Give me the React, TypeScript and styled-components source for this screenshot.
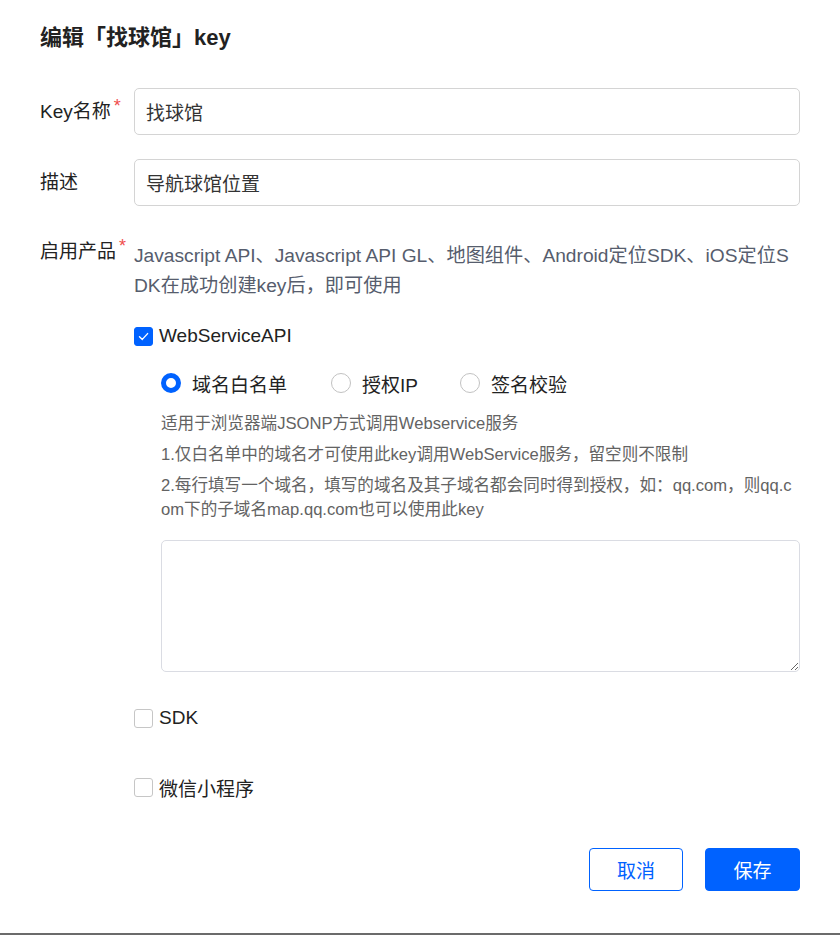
import React from "react";
import styled, { createGlobalStyle } from "styled-components";

const Global = createGlobalStyle`
  html, body { margin: 0; padding: 0; background: #fff; }
  body { font-family: "Liberation Sans", "Noto Sans CJK SC", sans-serif; }
  * { box-sizing: border-box; }
`;

const Dialog = styled.div`
  width: 840px;
  height: 935px;
  padding: 24px 40px 0 40px;
  border-bottom: 2px solid #6b6b6b;
  display: flex;
  flex-direction: column;
  color: #222;
`;

const Title = styled.h2`
  margin: 0;
  font-size: 22px;
  line-height: 28px;
  font-weight: 700;
  color: #222;
`;

const Row = styled.div<{ $top: number; $align?: string }>`
  display: grid;
  grid-template-columns: 94px 1fr;
  align-items: ${(p) => p.$align ?? "center"};
  margin-top: ${(p) => p.$top}px;
`;

const Label = styled.div<{ $start?: boolean }>`
  font-size: 19px;
  line-height: 30px;
  color: #222;
  position: relative;
  align-self: ${(p) => (p.$start ? "start" : "center")};
  margin-top: ${(p) => (p.$start ? "-4px" : "0")};
`;

const Star = styled.span`
  color: #f04d4d;
  font-size: 18px;
  position: absolute;
  top: -6px;
  margin-left: 3px;
`;

const Input = styled.input`
  width: 100%;
  height: 47px;
  border: 1px solid #d4d4d4;
  border-radius: 5px;
  padding: 0 11px;
  font-family: inherit;
  font-size: 19px;
  color: #333;
  outline: none;
`;

const Products = styled.div`
  display: flex;
  flex-direction: column;
`;

const Desc = styled.div`
  font-size: 19.2px;
  line-height: 30px;
  color: #565d6d;
  word-break: break-all;
`;

const CheckRow = styled.label<{ $top: number }>`
  display: flex;
  align-items: center;
  height: 30px;
  gap: 6px;
  margin-top: ${(p) => p.$top}px;
  font-size: 19px;
  color: #222;
`;

const Box = styled.span<{ $on?: boolean }>`
  width: 19px;
  height: 19px;
  border-radius: 3px;
  border: 1px solid ${(p) => (p.$on ? "#0062ff" : "#c6c6c6")};
  background: ${(p) => (p.$on ? "#0062ff" : "#fff")};
  display: flex;
  align-items: center;
  justify-content: center;
  flex: none;
`;

const Sub = styled.div`
  padding-left: 27px;
  display: flex;
  flex-direction: column;
`;

const RadioGroup = styled.div`
  display: flex;
  align-items: center;
  height: 30px;
  margin-top: 17px;
`;

const RadioItem = styled.label<{ $w: number }>`
  display: flex;
  align-items: center;
  gap: 11px;
  width: ${(p) => p.$w}px;
  font-size: 19px;
  color: #222;
`;

const Dot = styled.span<{ $on?: boolean }>`
  width: 20px;
  height: 20px;
  border-radius: 50%;
  border: ${(p) => (p.$on ? "5px solid #0062ff" : "1px solid #c2c2c2")};
  background: #fff;
  flex: none;
`;

const Help = styled.div`
  margin-top: 14px;
  display: flex;
  flex-direction: column;
  gap: 7px;
`;

const HelpLine = styled.p`
  margin: 0;
  font-size: 16.6px;
  line-height: 24px;
  color: #636363;
  word-break: break-all;
`;

const Area = styled.textarea`
  margin-top: 18px;
  width: 100%;
  height: 132px;
  border: 1px solid #dadce3;
  border-radius: 5px;
  resize: vertical;
  font-family: inherit;
  font-size: 16px;
  padding: 8px 12px;
  outline: none;
`;

const Footer = styled.div`
  display: flex;
  justify-content: flex-end;
  gap: 22px;
  margin-top: 46px;
`;

const Button = styled.button<{ $primary?: boolean }>`
  height: 43px;
  width: ${(p) => (p.$primary ? 95 : 94)}px;
  border-radius: 4px;
  border: 1px solid #0062ff;
  background: ${(p) => (p.$primary ? "#0062ff" : "#fff")};
  color: ${(p) => (p.$primary ? "#fff" : "#0062ff")};
  font-family: inherit;
  font-size: 19px;
  cursor: pointer;
`;

const Check = () => (
  <svg width="13" height="13" viewBox="0 0 13 13">
    <path d="M2.5 6.8 L5.3 9.4 L10.6 3.6" fill="none" stroke="#fff" strokeWidth="1.4" strokeLinecap="round" strokeLinejoin="round" />
  </svg>
);

export default function App() {
  return (
    <>
      <Global />
      <Dialog>
        <Title>编辑「找球馆」key</Title>
        <Row $top={36}>
          <Label>
            Key名称<Star>*</Star>
          </Label>
          <Input defaultValue="找球馆" />
        </Row>
        <Row $top={24}>
          <Label>描述</Label>
          <Input defaultValue="导航球馆位置" />
        </Row>
        <Row $top={35} $align="start">
          <Label $start>
            启用产品<Star>*</Star>
          </Label>
          <Products>
            <Desc>
              Javascript API、Javascript API GL、地图组件、Android定位SDK、iOS定位SDK在成功创建key后，即可使用
            </Desc>
            <CheckRow $top={20}>
              <Box $on>
                <Check />
              </Box>
              WebServiceAPI
            </CheckRow>
            <Sub>
              <RadioGroup>
                <RadioItem $w={170}>
                  <Dot $on />
                  域名白名单
                </RadioItem>
                <RadioItem $w={129}>
                  <Dot />
                  授权IP
                </RadioItem>
                <RadioItem $w={150}>
                  <Dot />
                  签名校验
                </RadioItem>
              </RadioGroup>
              <Help>
                <HelpLine>适用于浏览器端JSONP方式调用Webservice服务</HelpLine>
                <HelpLine>1.仅白名单中的域名才可使用此key调用WebService服务，留空则不限制</HelpLine>
                <HelpLine>
                  2.每行填写一个域名，填写的域名及其子域名都会同时得到授权，如：qq.com，则qq.com下的子域名map.qq.com也可以使用此key
                </HelpLine>
              </Help>
              <Area />
            </Sub>
            <CheckRow $top={31}>
              <Box />
              SDK
            </CheckRow>
            <CheckRow $top={39}>
              <Box />
              微信小程序
            </CheckRow>
          </Products>
        </Row>
        <Footer>
          <Button>取消</Button>
          <Button $primary>保存</Button>
        </Footer>
      </Dialog>
    </>
  );
}
